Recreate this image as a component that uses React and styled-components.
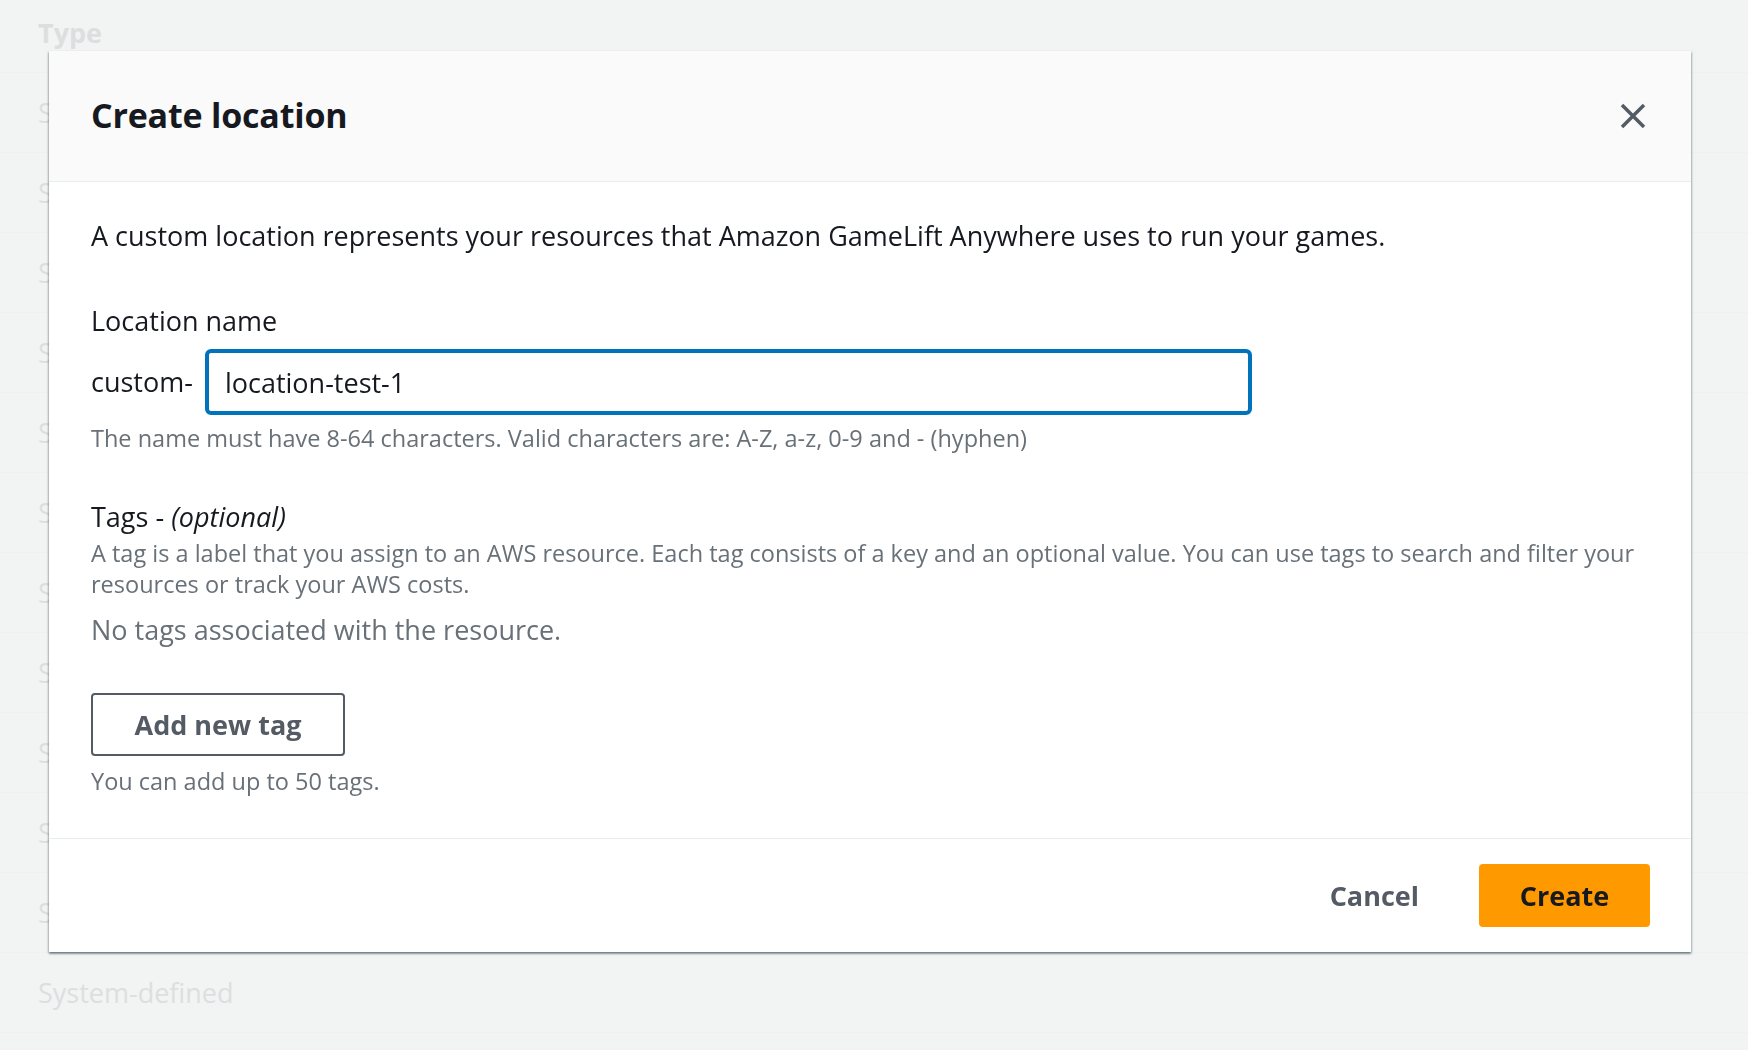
import React, { useState } from "react";
import styled, { createGlobalStyle } from "styled-components";

const GlobalStyle = createGlobalStyle`
  html, body {
    margin: 0;
    padding: 0;
    background-color: #f2f3f3;
    overflow: hidden;
  }
  * {
    box-sizing: border-box;
  }
`;

const Page = styled.div`
  position: relative;
  min-height: 100vh;
  background-color: #f2f3f3;
  font-family: "Open Sans", "Noto Sans", sans-serif;
`;

/* faded table behind the modal */
const Table = styled.div`
  display: flex;
  flex-direction: column;
`;

const HeaderCell = styled.div`
  height: 73px;
  padding: 14px 0 0 38px;
  font-size: 27px;
  font-weight: 700;
  color: #dcdfe0;
  border-bottom: 1px solid #eff0f0;
`;

const Row = styled.div`
  height: 80px;
  display: flex;
  align-items: center;
  padding-left: 38px;
  font-size: 27px;
  color: #dcdfe0;
  border-bottom: 1px solid #eff0f0;
`;

const Overlay = styled.div`
  position: fixed;
  inset: 0;
  padding: 51px 0 0 49px;
  display: flex;
  align-items: flex-start;
`;

const Modal = styled.div`
  width: 1642px;
  background-color: #ffffff;
  box-shadow: 0 2px 2px 0 rgba(0, 28, 36, 0.35), 1px 1px 2px 0 rgba(0, 28, 36, 0.2),
    -1px 1px 2px 0 rgba(0, 28, 36, 0.2);
`;

const ModalHeader = styled.div`
  height: 131px;
  display: flex;
  align-items: center;
  justify-content: space-between;
  padding: 0 45px 0 42px;
  background-color: #fafafa;
  border-bottom: 1px solid #eaeded;
`;

const Title = styled.h2`
  margin: 0 0 2px 0;
  font-size: 34px;
  font-weight: 700;
  color: #16191f;
  letter-spacing: -0.2px;
`;

const CloseButton = styled.button`
  border: none;
  background: none;
  padding: 0;
  width: 26px;
  height: 26px;
  cursor: pointer;
  display: flex;
`;

const Body = styled.div`
  display: flex;
  flex-direction: column;
  align-items: flex-start;
  padding: 36px 42px 42px 42px;
`;

const Text = styled.p`
  margin: ${(p) => p.$margin || "0"};
  font-size: ${(p) => (p.$small ? "23.5px" : "27px")};
  line-height: ${(p) => p.$lh || (p.$small ? "30px" : "36px")};
  color: ${(p) => (p.$muted ? "#687078" : "#16191f")};
`;

const InputRow = styled.div`
  display: flex;
  align-items: center;
  gap: 12px;
  margin-top: 10px;
`;

const Prefix = styled.span`
  font-size: 27px;
  line-height: 36px;
  color: #16191f;
`;

const Input = styled.input`
  width: 1047px;
  height: 66px;
  padding: 0 16px;
  border: 4px solid #0073bb;
  border-radius: 6px;
  font-family: inherit;
  font-size: 27px;
  color: #16191f;
  outline: none;
`;

const NormalButton = styled.button`
  width: 254px;
  height: 63px;
  margin-top: 45px;
  border: 2px solid #545b64;
  border-radius: 4px;
  background-color: #ffffff;
  color: #545b64;
  font-family: inherit;
  font-size: 27px;
  font-weight: 700;
  cursor: pointer;
`;

const Footer = styled.div`
  height: 114px;
  display: flex;
  align-items: center;
  justify-content: flex-end;
  gap: 20px;
  padding-right: 41px;
  border-top: 1px solid #eaeded;
`;

const FooterButton = styled.button`
  height: 63px;
  padding: 0 ${(p) => (p.$primary ? "38px" : "40px")};
  min-width: ${(p) => (p.$primary ? "171px" : "0")};
  border: none;
  border-radius: 4px;
  background-color: ${(p) => (p.$primary ? "#ff9900" : "transparent")};
  color: ${(p) => (p.$primary ? "#16191f" : "#545b64")};
  font-family: inherit;
  font-size: 27px;
  font-weight: 700;
  cursor: pointer;
`;

const CloseIcon = () => (
  <svg width="26" height="26" viewBox="0 0 26 26">
    <path d="M2 2 L24 24 M24 2 L2 24" stroke="#545b64" strokeWidth="3.5" fill="none" />
  </svg>
);

const App = () => {
  const [name, setName] = useState("location-test-1");
  const rows = Array.from({ length: 12 }, (_, i) => i);

  return (
    <Page>
      <GlobalStyle />
      <Table>
        <HeaderCell>Type</HeaderCell>
        {rows.map((i) => (
          <Row key={i}>System-defined</Row>
        ))}
      </Table>

      <Overlay>
        <Modal>
          <ModalHeader>
            <Title>Create location</Title>
            <CloseButton aria-label="Close">
              <CloseIcon />
            </CloseButton>
          </ModalHeader>

          <Body>
            <Text>
              A custom location represents your resources that Amazon GameLift Anywhere uses to run
              your games.
            </Text>

            <Text $margin="49px 0 0 0">Location name</Text>
            <InputRow>
              <Prefix>custom-</Prefix>
              <Input value={name} onChange={(e) => setName(e.target.value)} />
            </InputRow>
            <Text $small $muted $margin="8px 0 0 0">
              The name must have 8-64 characters. Valid characters are: A-Z, a-z, 0-9 and - (hyphen)
            </Text>

            <Text $margin="46px 0 0 0">
              Tags - <i>(optional)</i>
            </Text>
            <Text $small $muted $lh="31px" $margin="3px 0 0 0">
              A tag is a label that you assign to an AWS resource. Each tag consists of a key and an
              optional value. You can use tags to search and filter your resources or track your AWS
              costs.
            </Text>
            <Text $muted $margin="12px 0 0 0">
              No tags associated with the resource.
            </Text>

            <NormalButton>Add new tag</NormalButton>
            <Text $small $muted $margin="10px 0 0 0">
              You can add up to 50 tags.
            </Text>
          </Body>

          <Footer>
            <FooterButton>Cancel</FooterButton>
            <FooterButton $primary>Create</FooterButton>
          </Footer>
        </Modal>
      </Overlay>
    </Page>
  );
};

export default App;
